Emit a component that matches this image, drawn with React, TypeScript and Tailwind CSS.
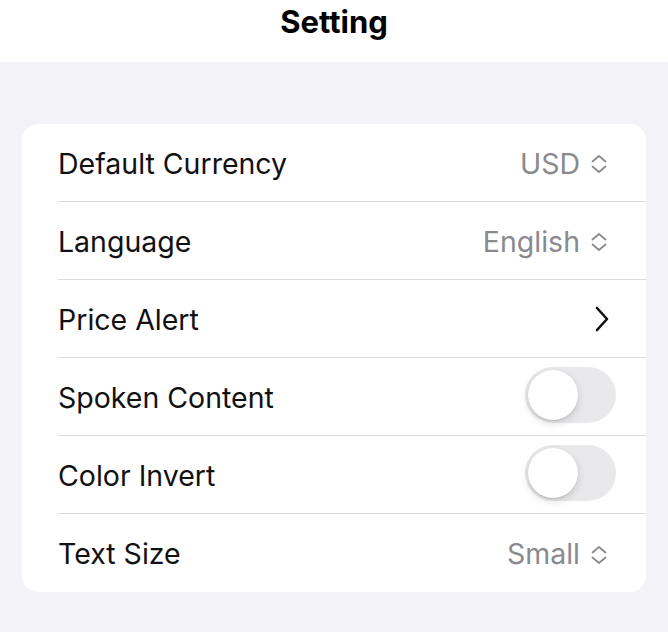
import React, { useState } from "react";

const UpDown = () => (
  <svg width="18" height="22" viewBox="0 0 18 22" fill="none" className="ml-[10px]">
    <path d="M2.5 8.5 L9 3 L15.5 8.5" stroke="#8a8a8e" strokeWidth="1.8" strokeLinecap="round" strokeLinejoin="round" />
    <path d="M2.5 13.5 L9 19 L15.5 13.5" stroke="#8a8a8e" strokeWidth="1.8" strokeLinecap="round" strokeLinejoin="round" />
  </svg>
);

const ChevronRight = () => (
  <svg width="16" height="26" viewBox="0 0 16 26" fill="none" className="mr-[4px]">
    <path d="M3 2 L13 13 L3 24" stroke="#111" strokeWidth="2.6" strokeLinecap="round" strokeLinejoin="round" />
  </svg>
);

const Toggle = ({ on, onClick }: { on: boolean; onClick: () => void }) => (
  <button
    onClick={onClick}
    className={`relative w-[91px] h-[56px] rounded-full transition-colors ${on ? "bg-[#34c759]" : "bg-[#e9e9eb]"}`}
  >
    <span
      className={`absolute top-[3px] w-[50px] h-[50px] rounded-full bg-white shadow-[0_3px_8px_rgba(0,0,0,0.15),0_1px_1px_rgba(0,0,0,0.1)] transition-all ${on ? "left-[38px]" : "left-[3px]"}`}
    />
  </button>
);

const Row = ({ label, children, last }: { label: string; children: React.ReactNode; last?: boolean }) => (
  <div className="pl-[36px]">
    <div className={`h-[78px] flex items-center justify-between pr-[32px] ${last ? "" : "border-b border-[#dcdcde]"}`}>
      <span className="text-[28.5px] text-[#111] pt-[3px]">{label}</span>
      {children}
    </div>
  </div>
);

const Value = ({ text }: { text: string }) => (
  <div className="flex items-center mr-[6px] pt-[3px]">
    <span className="text-[28.5px] text-[#8a8a8e]">{text}</span>
    <UpDown />
  </div>
);

export default function App() {
  const [spoken, setSpoken] = useState(false);
  const [invert, setInvert] = useState(false);

  return (
    <div className="w-[668px] h-[632px] bg-[#f2f2f7] font-['Inter',sans-serif]">
      <header className="h-[62px] bg-white flex items-start justify-center">
        <h1 className="text-[31px] font-bold text-black leading-[44px]">Setting</h1>
      </header>
      <main className="px-[22px] pt-[62px]">
        <div className="bg-white rounded-[16px] overflow-hidden">
          <Row label="Default Currency">
            <Value text="USD" />
          </Row>
          <Row label="Language">
            <Value text="English" />
          </Row>
          <Row label="Price Alert">
            <ChevronRight />
          </Row>
          <Row label="Spoken Content">
            <div className="-mr-[2px] mt-[2px]">
              <Toggle on={spoken} onClick={() => setSpoken(!spoken)} />
            </div>
          </Row>
          <Row label="Color Invert">
            <div className="-mr-[2px] mt-[2px]">
              <Toggle on={invert} onClick={() => setInvert(!invert)} />
            </div>
          </Row>
          <Row label="Text Size" last>
            <Value text="Small" />
          </Row>
        </div>
      </main>
    </div>
  );
}
